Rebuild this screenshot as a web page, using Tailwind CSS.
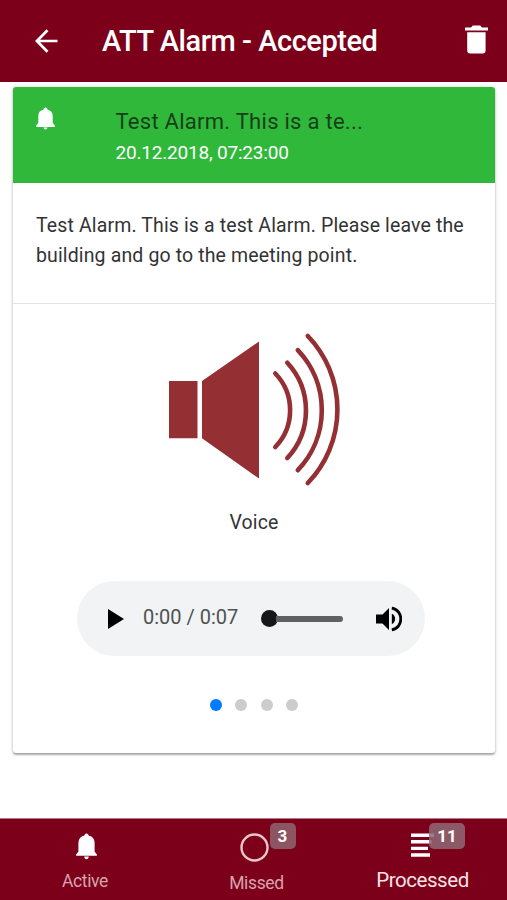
<!DOCTYPE html>
<html lang="en">
<head>
  <meta charset="UTF-8" />
  <meta name="viewport" content="width=device-width, initial-scale=1" />
  <title>ATT Alarm - Accepted</title>
  <script src="https://cdn.jsdelivr.net/npm/@tailwindcss/browser@4"></script>
</head>
<body class="h-screen flex flex-col overflow-hidden bg-white font-[Roboto,sans-serif] text-[#333]">

  <header class="h-[82px] shrink-0 flex items-center bg-[#7c001a] text-white pl-[35px] pr-[19px]">
    <svg class="w-[23px] h-[24px] shrink-0" viewBox="0 0 23 24" fill="none" stroke="currentColor" stroke-width="2.7">
      <path d="M12.5 1.2 1.9 12l10.6 10.8M2 12h20.5" />
    </svg>
    <h1 class="ml-[44px] text-[29px] leading-[40px] tracking-[-0.45px] font-medium whitespace-nowrap">ATT Alarm - Accepted</h1>
    <svg class="w-[23px] h-[29px] shrink-0 ml-auto mb-[4px]" viewBox="0 0 23 29" fill="currentColor">
      <path d="M2.2 7.2h18.4v18.3a3 3 0 0 1-3 3H5.2a3 3 0 0 1-3-3zM0 2.6h6L7.8.6h7.4l1.8 2h6v2.8H0z" />
    </svg>
  </header>

  <main class="flex-1 px-[13px] pt-[5px]">
    <div class="w-[482px] h-[666px] flex flex-col rounded-[3px] bg-white shadow-[0_2px_2px_rgba(0,0,0,0.3),0_0_4px_rgba(0,0,0,0.15)]">
      <div class="h-[96px] shrink-0 flex rounded-t-[3px] bg-[#30b83b] pl-[23px]">
        <svg class="w-[19px] h-[23px] mt-[20px]" viewBox="0 0 19 23" fill="#fff">
          <path d="M9.5.6c1.100 0 1.700.7 1.900 1.800 3.500.8 5.300 3.200 5.300 6.600v6.800l2.100 2.600v1.500H.2v-1.500l2.100-2.600V9c0-3.400 1.800-5.800 5.300-6.600.2-1.100.8-1.800 1.900-1.800zM7.500 20.500h4c-.2 1.300-.9 2-2 2s-1.800-.7-2-2z" />
        </svg>
        <div class="ml-[60.500px] pt-[18px] whitespace-nowrap">
          <h2 class="text-[22px] leading-[34px] tracking-[0.270px] text-[#173f1a]">Test Alarm. This is a te...</h2>
          <p class="text-[19px] leading-[28px] tracking-[-0.200px] text-white">20.12.2018, 07:23:00</p>
        </div>
      </div>

      <p class="h-[121px] shrink-0 border-b border-[#e4e4e4] px-[23px] pt-[28px] text-[19.5px] leading-[30px] tracking-[0.130px] whitespace-nowrap">Test Alarm. This is a test Alarm. Please leave the<br />building and go to the meeting point.</p>

      <div class="flex flex-col items-center pt-[26px]">
        <svg class="w-[180px] h-[160px]" viewBox="0 0 180 160">
          <path fill="#943034" d="M5 51h28.500v57.200H5zM38 51 95 11.500v137L38 108.200z" />
          <g fill="none" stroke="#943034" stroke-width="4.600" stroke-linecap="round">
            <path d="M111.300 43.500a53 53 0 0 1 0 73.500" />
            <path d="M123.300 32.800a70 70 0 0 1 0 95.200" />
            <path d="M133.800 20.200a87 87 0 0 1 0 120" />
            <path d="M143.800 6a106 106 0 0 1 0 147" />
          </g>
        </svg>
        <p class="mt-[18px] text-[19.500px] leading-[30px] tracking-[0.130px]">Voice</p>

        <!-- Audio player -->
        <div class="mt-[43px] -ml-[6px] w-[348px] h-[75px] flex items-center rounded-full bg-[#f1f3f4] pl-[31px]">
          <svg class="w-[16px] h-[20px]" viewBox="0 0 16 20"><path d="M0 0l16 10L0 20z" /></svg>
          <span class="ml-[19px] w-[97px] text-[20px] leading-[30px] text-[#505152] whitespace-nowrap -mt-[4px]">0:00 / 0:07</span>
          <div class="ml-[21px] w-[82px] flex items-center">
            <span class="size-[17px] rounded-full bg-[#171717]"></span>
            <span class="flex-1 h-[6px] -ml-[2px] rounded-r-full bg-[#5f6061]"></span>
          </div>
          <svg class="ml-[33px] w-[26px] h-[26px]" viewBox="0 0 26 26">
            <path d="M0 8.500h6.500L13 2v22l-6.500-6.500H0z" />
            <path d="M15.800 7.800c4.400 1.700 4.400 8.700 0 10.400z" />
            <path d="M15.800 2.200c12 2.200 12 19.400 0 21.600" fill="none" stroke="#000" stroke-width="2.800" />
          </svg>
        </div>

        <div class="mt-[43px] flex gap-[13.500px]">
          <span class="size-[12px] rounded-full bg-[#007aff]"></span>
          <span class="size-[12px] rounded-full bg-[#ccc]"></span>
          <span class="size-[12px] rounded-full bg-[#ccc]"></span>
          <span class="size-[12px] rounded-full bg-[#ccc]"></span>
        </div>
      </div>
    </div>
  </main>

  <nav class="h-[82px] shrink-0 grid grid-cols-3 border-t border-[#b07a86] bg-[#7c001a] text-[#d9a3ae] whitespace-nowrap">
    <a class="flex flex-col items-center pt-[14px]">
      <svg class="w-[21px] h-[27px] ml-[4px]" viewBox="0 0 21 27" fill="#fff">
        <path d="M10.500.5c1.200 0 1.900.8 2.100 2.100 4 .9 6 3.700 6 7.600v8.300l2.300 3v1.200H.1v-1.200l2.300-3v-8.300c0-3.900 2-6.700 6-7.600.2-1.300.9-2.100 2.100-2.100zM8.200 23.400h4.600c-.2 1.800-1.100 2.800-2.300 2.800s-2.100-1-2.300-2.800z" />
      </svg>
      <span class="mt-[8px] ml-[1px] text-[17.500px] leading-[26px] tracking-[-0.350px]">Active</span>
    </a>
    <a class="flex flex-col items-center pt-[14px]">
      <div class="relative ml-[1px]">
        <svg class="w-[29px] h-[29px]" viewBox="0 0 29 29"><circle cx="14.500" cy="14.500" r="13" fill="none" stroke="#ecc5cb" stroke-width="2.400" /></svg>
        <span class="absolute left-[30px] -top-[10px] w-[26px] h-[26px] rounded-[5px] bg-[#8b5561] text-center text-[17px] leading-[26px] font-bold text-white">3</span>
      </div>
      <span class="mt-[8px] ml-[6px] text-[17.500px] leading-[26px] tracking-[-0.350px]">Missed</span>
    </a>
    <a class="flex flex-col items-center pt-[14px] text-[#fbe3e6]">
      <div class="relative">
        <svg class="w-[23px] h-[25px]" viewBox="0 0 23 25" fill="#fff">
          <path d="M0 .5h23v3.400H0zM0 7.100h20.500v3.400H0zM0 13.700h17v3.400H0zM0 20.300h19v3.400H0z" />
        </svg>
        <span class="absolute left-[18px] -top-[10px] w-[36px] h-[26px] rounded-[5px] bg-[#8e6a74]/85 text-center text-[17px] leading-[26px] font-bold text-white">11</span>
      </div>
      <span class="mt-[8px] text-[20.500px] leading-[28px] tracking-[-0.450px]">Processed</span>
    </a>
  </nav>

</body>
</html>
